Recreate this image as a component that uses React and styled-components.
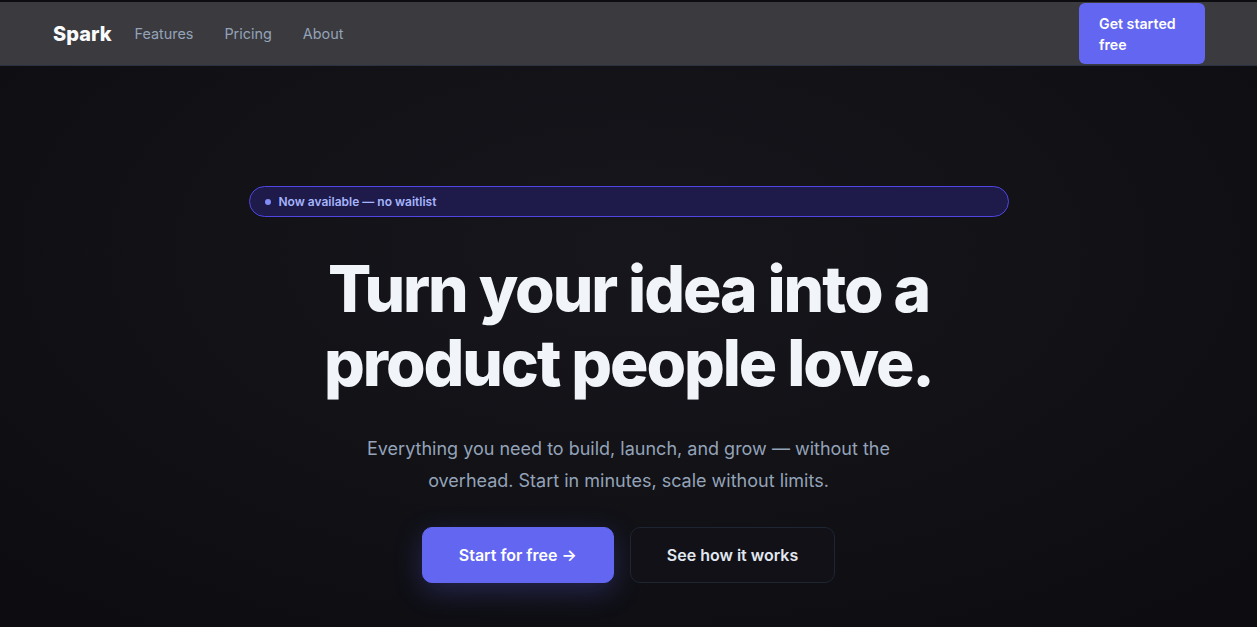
import React from "react";
import styled, { createGlobalStyle } from "styled-components";

const Global = createGlobalStyle`
  * { box-sizing: border-box; }
  html, body { margin: 0; padding: 0; }
  body {
    background: #0c0c11;
    font-family: Inter, "Noto Sans", "Liberation Sans", sans-serif;
    -webkit-font-smoothing: antialiased;
  }
`;

const Page = styled.div`
  min-height: 627px;
  display: flex;
  flex-direction: column;
  background: radial-gradient(ellipse 70% 75% at 50% 40%, #16161c 0%, #111116 55%, #0c0c11 100%);
`;

const Header = styled.header`
  display: flex;
  align-items: center;
  justify-content: space-between;
  height: 66px;
  padding: 0 52px 0 53px;
  background: #3a3a3f;
  border-top: 2px solid #0c0c11;
  border-bottom: 1px solid #2a3140;
`;

const Left = styled.div`
  display: flex;
  align-items: center;
  gap: 23px;
`;

const Logo = styled.a`
  font-size: 20px;
  font-weight: 800;
  color: #f8fafc;
  text-decoration: none;
`;

const Nav = styled.nav`
  display: flex;
  align-items: center;
  gap: 31px;
`;

const NavLink = styled.a`
  font-size: 14.4px;
  font-weight: 400;
  color: #94a3b8;
  text-decoration: none;
`;

const HeaderButton = styled.a`
  display: block;
  width: 126px;
  padding: 9.5px 20px;
  border-radius: 6px;
  background: #6366f1;
  color: #ffffff;
  font-size: 14.2px;
  font-weight: 600;
  line-height: 21px;
  text-decoration: none;
`;

const Hero = styled.main`
  display: flex;
  flex-direction: column;
  align-items: center;
  padding-top: 120px;
  text-align: center;
`;

const Container = styled.div`
  width: 760px;
  display: flex;
  flex-direction: column;
  align-items: center;
`;

const Badge = styled.div`
  align-self: stretch;
  display: flex;
  align-items: center;
  gap: 8px;
  height: 31px;
  padding: 0 15px;
  border: 1px solid #4f46e5;
  border-radius: 999px;
  background: #1e1b4b;
  color: #a5b4fc;
  font-size: 12px;
  font-weight: 600;
`;

const Dot = styled.span`
  width: 6px;
  height: 6px;
  border-radius: 50%;
  background: #818cf8;
`;

const Title = styled.h1`
  margin: 35px 0 0;
  font-size: 64px;
  font-weight: 800;
  line-height: 74px;
  letter-spacing: -0.032em;
  color: #f1f5f9;
`;

const Subtitle = styled.p`
  margin: 33px 0 0;
  max-width: 540px;
  font-size: 18px;
  line-height: 32px;
  color: #94a3b8;
`;

const Actions = styled.div`
  display: flex;
  gap: 16px;
  margin-top: 30px;
`;

const Button = styled.a`
  display: flex;
  align-items: center;
  justify-content: center;
  height: 56px;
  padding: 0 36px;
  border-radius: 10px;
  font-size: 16px;
  font-weight: 600;
  text-decoration: none;
  color: ${(p) => (p.$primary ? "#ffffff" : "#e2e8f0")};
  background: ${(p) => (p.$primary ? "#6366f1" : "#111117")};
  border: 1px solid ${(p) => (p.$primary ? "#6366f1" : "#1e2633")};
  box-shadow: ${(p) => (p.$primary ? "0 8px 28px rgba(99, 102, 241, 0.28)" : "none")};
`;

export default function App() {
  return (
    <>
      <Global />
      <Page>
        <Header>
          <Left>
            <Logo href="#">Spark</Logo>
            <Nav>
              <NavLink href="#">Features</NavLink>
              <NavLink href="#">Pricing</NavLink>
              <NavLink href="#">About</NavLink>
            </Nav>
          </Left>
          <HeaderButton href="#">Get started free</HeaderButton>
        </Header>
        <Hero>
          <Container>
            <Badge>
              <Dot />
              Now available — no waitlist
            </Badge>
            <Title>
              Turn your idea into a
              <br />
              product people love.
            </Title>
            <Subtitle>
              Everything you need to build, launch, and grow — without the overhead. Start in minutes, scale without limits.
            </Subtitle>
            <Actions>
              <Button $primary href="#">Start for free →</Button>
              <Button href="#">See how it works</Button>
            </Actions>
          </Container>
        </Hero>
      </Page>
    </>
  );
}
